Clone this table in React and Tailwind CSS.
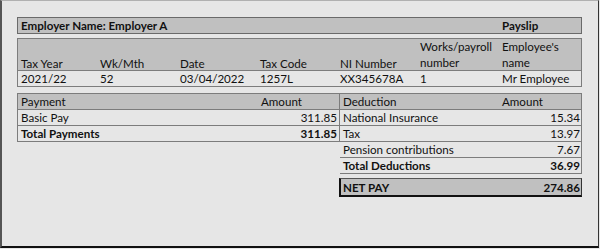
export default function App() {
  const hdr = "bg-[#c0c0c0]";
  return (
    <div className="w-[600px] h-[249px] bg-[#e6e6e6] font-['Lato',sans-serif] text-[11.6px] leading-[15px] text-[#111]">
      <div className="w-[599px] h-[248px] border-l-2 border-t border-r border-b-2 border-l-[#555] border-t-[#b0b0b0] border-r-[#333] border-b-[#111] pl-[15px] pt-[16px]">
        <div className="w-[565px] flex flex-col">
          {/* Employer bar */}
          <div className={`flex h-[17px] border border-[#6a6a6a] ${hdr} font-bold`}>
            <div className="w-[481px] pl-[3px]">Employer Name: Employer A</div>
            <div className="pl-[3px]">Payslip</div>
          </div>

          {/* Header table */}
          <div className="mt-[4px] border border-[#7c7c7c]">
            <div className={`grid grid-cols-[79px_80px_80px_80px_80px_82px_82px] h-[32px] items-end ${hdr} border-b border-[#7c7c7c]`}>
              <div className="pl-[3px] pb-px">Tax Year</div>
              <div className="pl-[3px] pb-px">Wk/Mth</div>
              <div className="pl-[3px] pb-px">Date</div>
              <div className="pl-[3px] pb-px">Tax Code</div>
              <div className="pl-[3px] pb-px">NI Number</div>
              <div className="pl-[3px] pb-px leading-[16px]">Works/payroll<br />number</div>
              <div className="pl-[3px] pb-px leading-[16px]">Employee's<br />name</div>
            </div>
            <div className="grid grid-cols-[79px_80px_80px_80px_80px_82px_82px] h-[15px]">
              <div className="pl-[3px]">2021/22</div>
              <div className="pl-[3px]">52</div>
              <div className="pl-[3px]">03/04/2022</div>
              <div className="pl-[3px]">1257L</div>
              <div className="pl-[3px]">XX345678A</div>
              <div className="pl-[3px]">1</div>
              <div className="pl-[3px]">Mr Employee</div>
            </div>
          </div>

          {/* Payments & deductions */}
          <div className="mt-[6px] flex items-start">
            <div className="w-[323px] border border-[#7c7c7c]">
              <div className={`flex h-[16px] border-b border-[#7c7c7c] ${hdr}`}>
                <div className="w-[239px] pl-[3px]">Payment</div>
                <div className="flex-1 pl-[4px]">Amount</div>
              </div>
              <div className="flex h-[16px] border-b border-[#7c7c7c]">
                <div className="w-[239px] pl-[3px]">Basic Pay</div>
                <div className="flex-1 pr-[2px] text-right">311.85</div>
              </div>
              <div className="flex h-[15px] font-bold">
                <div className="w-[239px] pl-[3px]">Total Payments</div>
                <div className="flex-1 pr-[2px] text-right">311.85</div>
              </div>
            </div>

            <div className="w-[242px] flex flex-col">
              <div className="border-t border-r border-b border-[#7c7c7c]">
                <div className={`flex h-[16px] border-b border-[#7c7c7c] ${hdr}`}>
                  <div className="w-[159px] pl-[3px]">Deduction</div>
                  <div className="flex-1 pl-[3px]">Amount</div>
                </div>
                <div className="flex h-[16px] border-b border-[#7c7c7c]">
                  <div className="w-[159px] pl-[3px]">National Insurance</div>
                  <div className="flex-1 pr-[1px] text-right">15.34</div>
                </div>
                <div className="flex h-[16px] border-b border-[#7c7c7c]">
                  <div className="w-[159px] pl-[3px]">Tax</div>
                  <div className="flex-1 pr-[1px] text-right">13.97</div>
                </div>
                <div className="flex h-[16px] border-b border-[#7c7c7c]">
                  <div className="w-[159px] pl-[3px]">Pension contributions</div>
                  <div className="flex-1 pr-[1px] text-right">7.67</div>
                </div>
                <div className="flex h-[15px] font-bold">
                  <div className="w-[159px] pl-[3px]">Total Deductions</div>
                  <div className="flex-1 pr-[1px] text-right">36.99</div>
                </div>
              </div>

              <div className={`mt-[4px] -ml-px w-[243px] h-[19px] flex items-center font-bold ${hdr} border-t border-r border-l-2 border-b-2 border-t-[#555] border-r-[#333] border-l-[#111] border-b-[#111]`}>
                <div className="w-[158px] pl-[2px]">NET PAY</div>
                <div className="flex-1 pr-[1px] text-right">274.86</div>
              </div>
            </div>
          </div>
        </div>
      </div>
    </div>
  );
}
